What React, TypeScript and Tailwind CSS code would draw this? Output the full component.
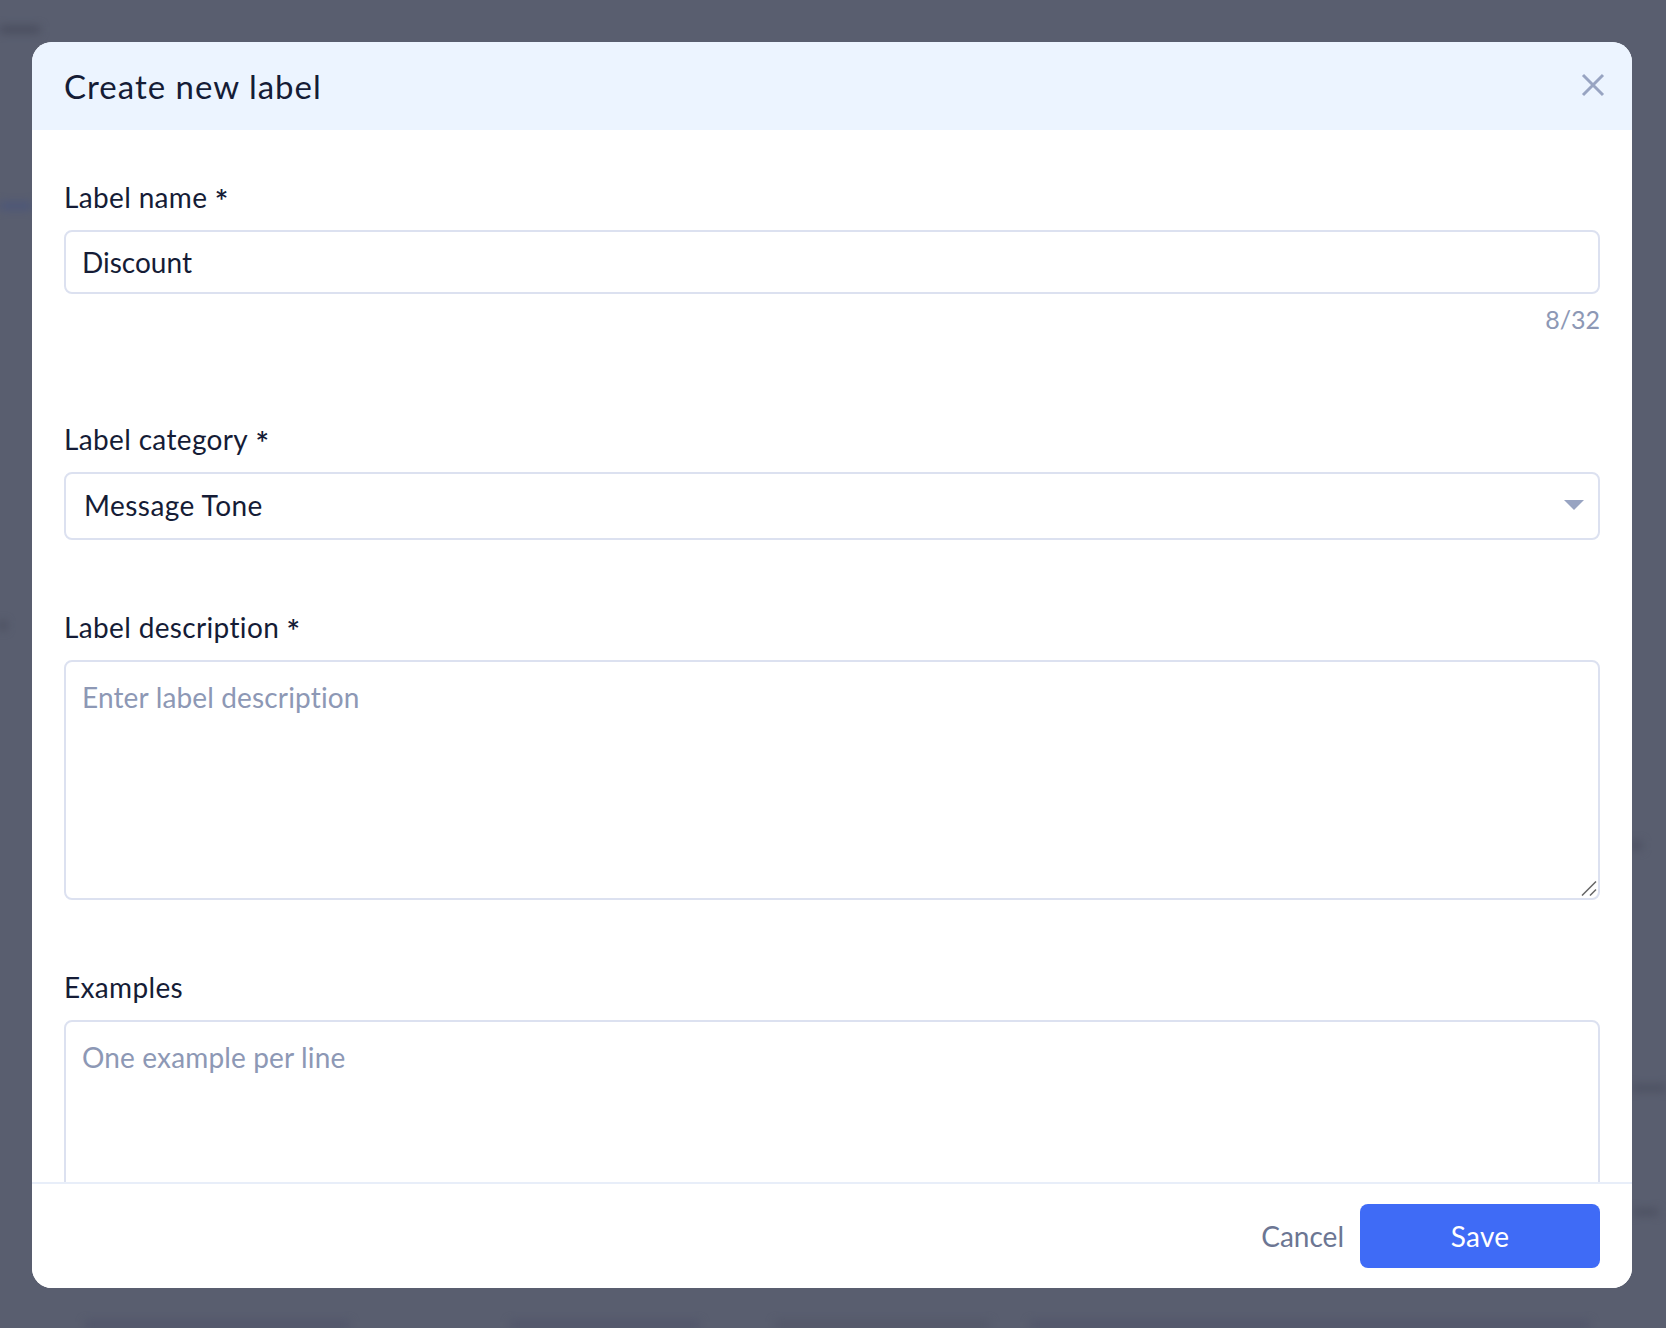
import React from "react";

const font = "font-['Lato','Noto_Sans',sans-serif] [font-variant-ligatures:none]";
const field = "block w-full rounded-lg border-2 border-[#dce1f0] text-[#151c36]";

const Label = ({ text, required }: { text: string; required?: boolean }) => (
  <label className="block text-[28px] leading-[36px] tracking-[0.35px] text-[#151c36]">
    {text}
    {required && <span className="font-['Inter',sans-serif] text-[26px] leading-none"> *</span>}
  </label>
);

const Area = ({ placeholder, height, grip }: { placeholder: string; height: string; grip?: boolean }) => (
  <div className="relative mt-[15px]">
    <textarea
      placeholder={placeholder}
      className={`${field} ${height} resize-none px-[16px] pb-[16px] pt-[17px] text-[28px] leading-[36px] tracking-[0.15px] outline-none placeholder:text-[#8d98b5]`}
    />
    {grip && (
      <svg className="absolute bottom-[4px] right-[3px]" width="16" height="15" viewBox="0 0 16 15" fill="none" stroke="#666" strokeWidth="1.5">
        <path d="M1 14.5L15 .5M9 14.5l6-6" />
      </svg>
    )}
  </div>
);

// what is left of the page under the dimmed, blurred overlay
const Backdrop = () => (
  <div className="absolute inset-0 flex flex-col blur-[4px]">
    <div className="mt-[26px] h-[8px] w-[40px] bg-[#484c5d]" />
    <div className="mt-[169px] h-[8px] w-[32px] bg-[#4c5679]" />
    <div className="mt-[411px] h-[10px] w-[6px] bg-[#484c5d]" />
    <div className="mr-[24px] mt-[211px] h-[10px] w-[12px] self-end bg-[#4d5162]" />
    <div className="mt-[235px] h-[6px] w-[34px] self-end bg-[#4a4e5f]" />
    <div className="mr-[8px] mt-[118px] h-[6px] w-[24px] self-end bg-[#4a4e5f]" />
    <div className="mt-[106px] flex h-[8px] pl-[85px]">
      <div className="w-[265px] bg-[#50546a]" />
      <div className="ml-[160px] w-[190px] bg-[#50546a]" />
      <div className="ml-[75px] w-[215px] bg-[#525668]" />
      <div className="ml-[40px] w-[560px] bg-[#50546a]" />
    </div>
  </div>
);

export default function App() {
  return (
    <div className={`${font} relative flex h-[1328px] w-[1666px] items-start overflow-hidden bg-[#595e6f] pl-[32px] pt-[42px]`}>
      <Backdrop />

      <div className="relative flex h-[1246px] w-[1600px] flex-col overflow-hidden rounded-[20px] bg-white">
        <div className="flex h-[88px] shrink-0 items-center justify-between bg-[#ecf4ff] pl-[32px] pr-[26px]">
          <h1 className="text-[33px] leading-[44px] tracking-[1px] text-[#151c36]">Create new label</h1>
          <button className="mb-[2px] text-[#98a4c2]">
            <svg width="26" height="26" viewBox="0 0 26 26" fill="none" stroke="currentColor" strokeWidth="3">
              <path d="M3 3l20 20M23 3L3 23" />
            </svg>
          </button>
        </div>

        <div className="min-h-0 flex-1 overflow-hidden px-[32px] pt-[49px]">
          <Label text="Label name" required />
          <input
            defaultValue="Discount"
            className={`${field} mt-[15px] h-[64px] px-[16px] text-[28px] outline-none`}
          />
          <div className="mt-[9px] text-right text-[25px] leading-[32px] text-[#8d98b5]">8/32</div>

          <div className="mt-[86px]">
            <Label text="Label category" required />
          </div>
          <div className="mt-[15px] flex h-[68px] items-center justify-between rounded-lg border-2 border-[#dce1f0] pb-[2px] pl-[18px] pr-[14px] text-[28px] tracking-[0.45px] text-[#151c36]">
            Message Tone
            <span className="h-0 w-0 border-x-[10px] border-t-[10px] border-x-transparent border-t-[#98a4c2]" />
          </div>

          <div className="mt-[69px]">
            <Label text="Label description" required />
          </div>
          <Area placeholder="Enter label description" height="h-[240px]" grip />

          <div className="mt-[69px]">
            <Label text="Examples" />
          </div>
          <Area placeholder="One example per line" height="h-[300px]" />
        </div>

        <div className="flex h-[106px] shrink-0 items-center justify-end gap-[16px] border-t-2 border-[#e8eef9] bg-white pr-[32px]">
          <button className="text-[28px] text-[#6c7693]">Cancel</button>
          <button className="h-[64px] w-[240px] rounded-lg bg-[#3f6bf6] text-[28px] tracking-[0.3px] text-white">Save</button>
        </div>
      </div>
    </div>
  );
}
